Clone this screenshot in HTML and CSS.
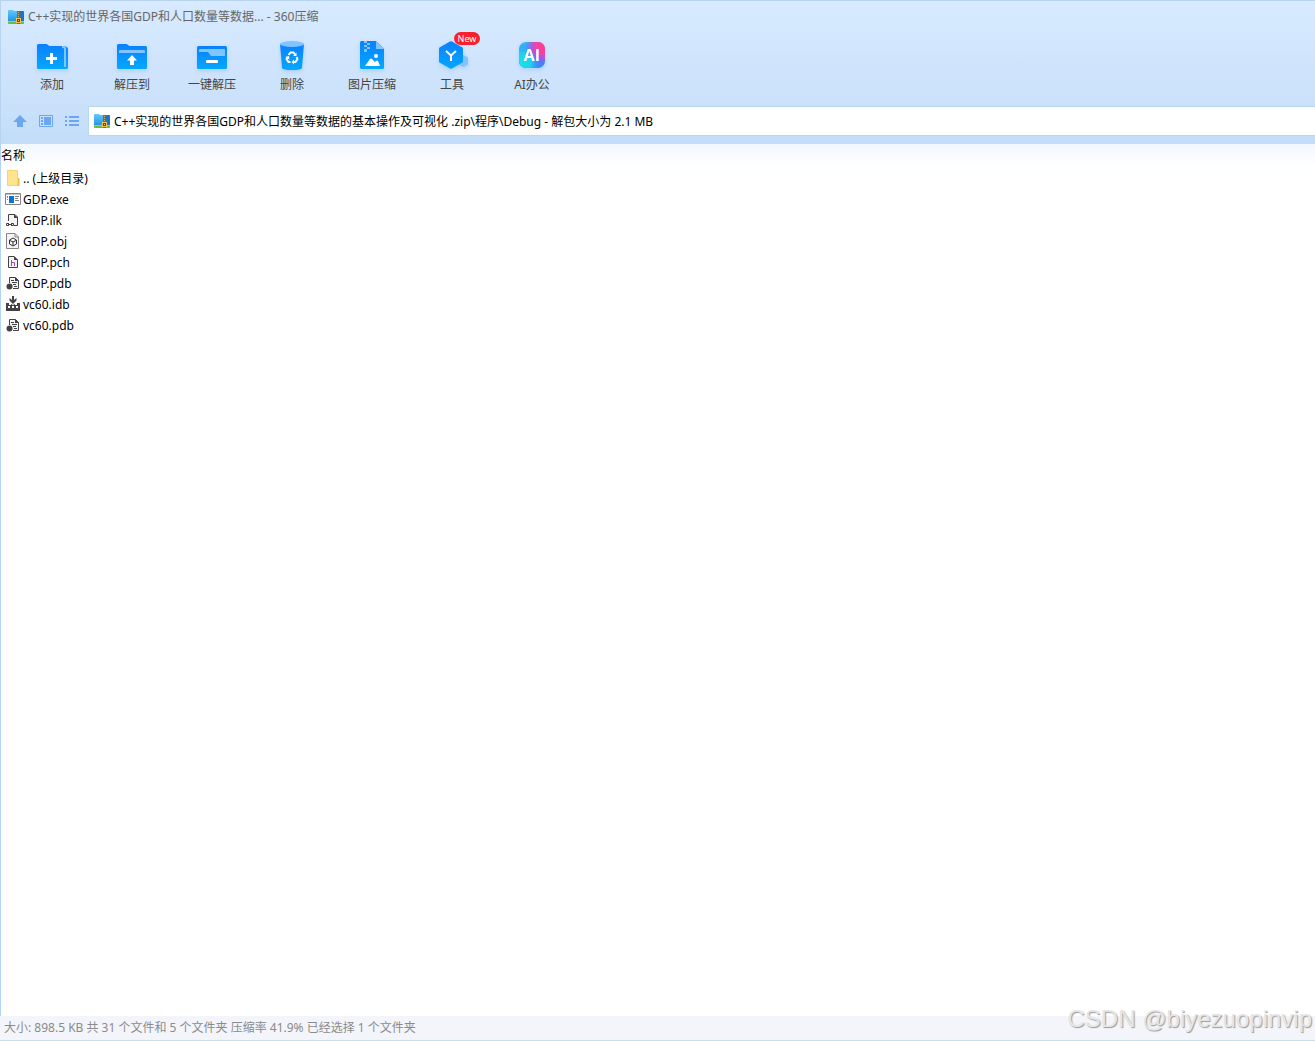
FILE: index.html
```html
<!DOCTYPE html>
<html lang="zh-CN">
<head>
  <meta charset="UTF-8" />
  <meta name="viewport" content="width=device-width, initial-scale=1" />
  <title>360压缩</title>
  <link rel="stylesheet" href="styles.css">
</head>
<body>

  <!-- Shared symbols -->
  <svg class="defs" width="0" height="0" aria-hidden="true">
    <defs>
      <linearGradient id="blue" x1="0" y1="0" x2="0" y2="1">
        <stop offset="0" stop-color="#0a80ff" />
        <stop offset="1" stop-color="#04a8fe" />
      </linearGradient>
      <linearGradient id="folderBlue" x1="0" y1="0" x2="0" y2="1">
        <stop offset="0" stop-color="#5fcbfa" />
        <stop offset="1" stop-color="#2794e4" />
      </linearGradient>
      <linearGradient id="aiBase" x1="0" y1="0" x2="1" y2="1">
        <stop offset="0" stop-color="#21cdf2" />
        <stop offset="0.3" stop-color="#4a9bf5" />
        <stop offset="0.45" stop-color="#b04af0" />
        <stop offset="0.7" stop-color="#5b73f8" />
        <stop offset="1" stop-color="#2395ff" />
      </linearGradient>
      <radialGradient id="aiPink" cx="0.95" cy="0.15" r="0.7">
        <stop offset="0" stop-color="#ff3d86" />
        <stop offset="0.45" stop-color="#ee43ae" />
        <stop offset="1" stop-color="#b04af0" stop-opacity="0" />
      </radialGradient>
      <radialGradient id="aiCyan" cx="0.1" cy="0.8" r="0.75">
        <stop offset="0" stop-color="#16e4e8" />
        <stop offset="0.5" stop-color="#1fd0ee" />
        <stop offset="1" stop-color="#2395ff" stop-opacity="0" />
      </radialGradient>
    </defs>
    <symbol id="zip" viewBox="0 0 16 14">
      <path d="M0 1q0-1 1-1h4l1 1h9q1 0 1 1v9H0z" fill="url(#folderBlue)" />
      <path d="M12 1h3q1 0 1 1v9h-4z" fill="#1877c2" />
      <path d="M0 11h16v1H0z" fill="#f5b32b" />
      <path d="M0 12h16v1q0 1-1 1H1q-1 0-1-1z" fill="#66bd3f" />
      <path d="M9 1h3v13H9z" fill="#a95b17" />
      <path d="M10 2h1v1h-1zM10 4h1v1h-1zM10 6h1v1h-1z" fill="#d9a05c" />
      <path d="M8 8h5v5H8z" fill="#f2c451" />
      <path d="M9 9h3v3H9z" fill="#7b3c0a" />
      <path d="M10 10h1v1h-1z" fill="#f2c451" />
    </symbol>
    <symbol id="pdb" viewBox="0 0 14 14">
      <path d="M3.500 7V1.500H9.500L12.500 4.500V12.500H7" fill="#f3f3f3" stroke="#424242" />
      <path d="M9 1v4h4zM5 4h3v1H5zM6 6h5v1H6zM7 8h3v1H7zM8 10h3v1H8z" fill="#424242" />
      <circle cx="3.500" cy="10.500" r="3" fill="#424242" />
    </symbol>
  </svg>

  <div class="window">
    <header class="top">
      <div class="title-bar">
        <svg class="zip-icon"><use href="#zip" /></svg>
        <span>C++实现的世界各国GDP和人口数量等数据... - 360压缩</span>
      </div>

      <nav class="toolbar">
        <button type="button" class="tool">
          <svg class="tool-icon" viewBox="0 0 32 32">
            <path d="M1 4.500q0-1.500 1.500-1.500h8l3 2H27q4.500 0 5 3v18.500q0 1.500-1.500 1.500h-28q-1.500 0-1.500-1.500z" fill="url(#blue)" />
            <path d="M26 5h2q2 0 2 2V26H28V8q0-1-1-1h-1z" fill="#80c5ff" />
            <path d="M14 12h3v4h4v3h-4v4h-3v-4h-4v-3h4z" fill="#fff" />
          </svg>
          添加
        </button>
        <button type="button" class="tool">
          <svg class="tool-icon" viewBox="0 0 32 32">
            <path d="M1 4.500q0-1.500 1.500-1.500h8l3 2H29.500q1.500 0 1.500 1.500v20q0 1.500-1.500 1.500h-27q-1.500 0-1.500-1.500z" fill="url(#blue)" />
            <path d="M3 12V10Q3 9 4 9h24q1 0 1 1v2z" fill="#80c5ff" />
            <path d="M16 14l5 5.500h-3V24h-4v-4.500h-3z" fill="#fff" />
          </svg>
          解压到
        </button>
        <button type="button" class="tool">
          <svg class="tool-icon" viewBox="0 0 32 32">
            <rect x="1" y="5" width="30" height="23" rx="1.500" fill="url(#blue)" />
            <path d="M3 9q0-1 1-1h24q1 0 1 1v6H15l-3-4H3z" fill="#80c5ff" />
            <rect x="10" y="19" width="12" height="3" rx="1" fill="#fff" />
          </svg>
          一键解压
        </button>
        <button type="button" class="tool">
          <svg class="tool-icon" viewBox="0 0 32 32">
            <path d="M4 3h24l-2 24q-1 2-10 2T6 27z" fill="url(#blue)" />
            <ellipse cx="16" cy="3" rx="12" ry="3" fill="#80c5ff" />
            <g fill="none" stroke="#fff" stroke-width="2">
              <path d="M12.500 14l2-2.500h3l1.500 2" />
              <path d="M20.500 16l1 2-2 3H17.500" />
              <path d="M14.500 21h-2l-2-3 1-2" />
            </g>
            <path d="M20.500 11.500V15H17zM18 18.500v5L15.500 21zM9.500 16l3.500-1 .5 3.500z" fill="#fff" />
          </svg>
          删除
        </button>
        <button type="button" class="tool">
          <svg class="tool-icon" viewBox="0 0 32 32">
            <path d="M4 1.500Q4 0 5.500 0H20l8 8v18.500q0 1.500-1.500 1.500h-21Q4 28 4 26.500z" fill="url(#blue)" />
            <path d="M20 0l8 8h-8z" fill="#80c5ff" />
            <path d="M8 0h3v2H8zM11 2h3v2h-3zM8 4h3v2H8zM11 6h3v2h-3zM8 8h3v3H8z" fill="#80c5ff" />
            <path d="M9 25l5-7q1-1 2 0l3 3 1-1q1-1 2 0l2 5z" fill="#fff" />
            <circle cx="20" cy="15" r="2" fill="#fff" />
          </svg>
          图片压缩
        </button>
        <button type="button" class="tool">
          <svg class="tool-icon" viewBox="0 0 32 32">
            <path d="M27.500 14l4.500 2.500v7L27.500 26 22 23.500V17z" fill="#80c5ff" />
            <path d="M14 .5q1-.5 2 0L26.500 6.500q.5.500.5 1.500v12q0 1-.5 1.500L16 27.500q-1 .5-2 0L3.500 21.500Q3 21 3 20V8q0-1 .5-1.500z" fill="url(#blue)" />
            <path d="M10 10l5 4.500 5-4.500M15 14v6" fill="none" stroke="#fff" stroke-width="2" />
          </svg>
          <span class="badge">New</span>
          工具
        </button>
        <button type="button" class="tool">
          <svg class="tool-icon" viewBox="0 0 32 32">
            <rect x="3" y="1" width="26" height="26" rx="7" fill="url(#aiBase)" />
            <rect x="3" y="1" width="26" height="26" rx="7" fill="url(#aiCyan)" />
            <rect x="3" y="1" width="26" height="26" rx="7" fill="url(#aiPink)" />
            <text x="16" y="20" class="ai-text">AI</text>
          </svg>
          AI办公
        </button>
      </nav>

      <div class="address-bar">
        <div class="nav-buttons">
          <button type="button" class="nav-btn" aria-label="向上">
            <svg width="16" height="16" viewBox="0 0 16 16"><path d="M8 2l7 7h-4v5H5V9H1z" fill="#6ba6f2" /></svg>
          </button>
          <button type="button" class="nav-btn" aria-label="预览">
            <svg width="16" height="16" viewBox="0 0 16 16">
              <path d="M1.500 2.500h13v11h-13z" fill="none" stroke="#6ba6f2" />
              <path d="M6 4h7v8H6zM3 4h2v2H3zM3 7h2v2H3zM3 10h2v2H3z" fill="#6ba6f2" />
            </svg>
          </button>
          <button type="button" class="nav-btn" aria-label="列表">
            <svg width="16" height="16" viewBox="0 0 16 16"><path d="M1 3h2v2H1zM5 3h10v2H5zM1 7h2v2H1zM5 7h10v2H5zM1 11h2v2H1zM5 11h10v2H5z" fill="#6ba6f2" /></svg>
          </button>
        </div>
        <label class="path">
          <svg class="zip-icon"><use href="#zip" /></svg>
          <input type="text" class="path-input" aria-label="路径" value="C++实现的世界各国GDP和人口数量等数据的基本操作及可视化 .zip\程序\Debug - 解包大小为 2.1 MB" />
        </label>
      </div>
    </header>

    <!-- File list -->
    <main class="files">
      <table class="file-table">
        <thead>
          <tr><th>名称</th></tr>
        </thead>
        <tbody>
          <tr><td><div class="file">
            <svg class="file-icon" viewBox="0 0 16 16"><path d="M2 0h11v8h1v8H2z" fill="#ffe490" /><path d="M13 8h1.500v8H12v-7z" fill="#e9bf4d" /><path d="M2.500.5h10v15h-10z" fill="none" stroke="#f5d46f" /></svg>
            <span>.. (上级目录)</span>
          </div></td></tr>
          <tr><td><div class="file">
            <svg class="file-icon" viewBox="0 0 16 16"><path d="M.5 2.500h15v11H.5z" fill="#fff" stroke="#858585" /><path d="M1 3h14v1H1z" fill="#c4c4c4" /><path d="M4 5h5v7H4z" fill="#0875d1" /><path d="M2 5h1v2H2zM2 8h1v1H2zM10 5h4v1h-4zM10 7h3v1h-3zM10 9h4v1h-4z" fill="#858585" /></svg>
            <span>GDP.exe</span>
          </div></td></tr>
          <tr><td><div class="file">
            <svg class="file-icon" viewBox="0 0 16 16"><path d="M3.500 9V2.500H10L12.500 5v8.500H9" fill="#f3f3f3" stroke="#424242" /><path d="M9 2v4h4z" fill="#424242" /><path d="M4 11.500H1.500v2H4M6 11.500h2.500v2H6M3 12.500h4" fill="none" stroke="#424242" /></svg>
            <span>GDP.ilk</span>
          </div></td></tr>
          <tr><td><div class="file">
            <svg class="file-icon" viewBox="0 0 16 16"><path d="M1.500.5H10L13.500 4v11.500h-12z" fill="#f5f5f5" stroke="#858585" /><path d="M10 .5V4h3.500" fill="none" stroke="#858585" /><path d="M8 5l3.500 2v4L8 13l-3.500-2V7zM5 7.500L8 9l3-1.500M8 9v4" fill="none" stroke="#333" /></svg>
            <span>GDP.obj</span>
          </div></td></tr>
          <tr><td><div class="file">
            <svg class="file-icon" viewBox="0 0 16 16"><path d="M3.500 2.500H9L12.500 6v7.500h-9z" fill="#f3f3f3" stroke="#424242" /><path d="M9 2v4h4z" fill="#424242" /><path d="M6.500 6v6M6.500 8.500h3V12" fill="none" stroke="#a04ba8" /></svg>
            <span>GDP.pch</span>
          </div></td></tr>
          <tr><td><div class="file">
            <svg class="file-icon" viewBox="-1 -1 16 16"><use href="#pdb" width="14" height="14" /></svg>
            <span>GDP.pdb</span>
          </div></td></tr>
          <tr><td><div class="file">
            <svg class="file-icon" viewBox="0 0 16 16"><path d="M7 0h2v4l2.500-2v2.500L8 8 4.500 4.500V2L7 4z" fill="#424242" /><path d="M1 7h3v2h2V8l2 1 2-1v1h2V7h3v8H1z" fill="#424242" /><path d="M3 10h2v2H3zM7 10h2v2H7zM11 10h2v2h-2z" fill="#fff" /></svg>
            <span>vc60.idb</span>
          </div></td></tr>
          <tr><td><div class="file">
            <svg class="file-icon" viewBox="-1 -1 16 16"><use href="#pdb" width="14" height="14" /></svg>
            <span>vc60.pdb</span>
          </div></td></tr>
        </tbody>
      </table>
    </main>

    <footer class="status">
      <span>大小: 898.5 KB 共 31 个文件和 5 个文件夹 压缩率 41.9% 已经选择 1 个文件夹</span>
    </footer>
    <div class="watermark">CSDN @biyezuopinvip</div>
  </div>

</body>
</html>
```
FILE: styles.css
```css
* {
  box-sizing: border-box;
}

body {
  margin: 0;
  font-family: "Noto Sans", "Noto Sans CJK SC", sans-serif;
  font-size: 12px;
  line-height: 16px;
  color: #000;
  background: #fff;
}

button, input {
  font: inherit;
  color: inherit;
  border: none;
  background: none;
  padding: 0;
}

.defs {
  position: absolute;
}

.window {
  position: relative;
  display: flex;
  flex-direction: column;
  min-height: 100vh;
}

/* Title, toolbar and address */
.top {
  height: 144px;
  border-top: 1px solid #b7d3f0;
  border-left: 1px solid #b7d3f0;
  background: linear-gradient(#d7eaff, #cce2fb 65%, #c2ddf9);
}

.title-bar {
  display: flex;
  align-items: center;
  gap: 4px;
  height: 32px;
  padding-left: 7px;
  color: #666;
}

.zip-icon {
  width: 16px;
  height: 14px;
  flex: none;
}

.toolbar {
  display: flex;
  height: 73px;
  padding-left: 11px;
}

.tool {
  position: relative;
  display: flex;
  flex-direction: column;
  align-items: center;
  gap: 4px;
  width: 80px;
  height: 66px;
  padding-top: 8px;
  color: #444;
  cursor: pointer;
}

.tool-icon {
  width: 32px;
  height: 32px;
  overflow: visible;
  filter: drop-shadow(0 2px 2px rgba(40, 130, 230, 0.2));
}

.ai-text {
  font-family: "Open Sans", sans-serif;
  font-size: 16px;
  font-weight: bold;
  text-anchor: middle;
  fill: #fff;
}

.badge {
  position: absolute;
  top: -1px;
  left: 42px;
  width: 26px;
  height: 13px;
  border-radius: 7px;
  background: #f91f2c;
  color: #fff;
  font-size: 9px;
  line-height: 13px;
  text-align: center;
}

.address-bar {
  display: flex;
  align-items: center;
  height: 30px;
}

.nav-buttons {
  display: flex;
  gap: 10px;
  width: 87px;
  padding-left: 11px;
}

.nav-btn {
  width: 16px;
  height: 16px;
  cursor: pointer;
}

.nav-btn svg {
  display: block;
}

.path {
  display: flex;
  flex: 1;
  align-items: center;
  gap: 4px;
  height: 30px;
  padding-left: 5px;
  border: 1px solid #b9d6f3;
  border-right: none;
  background: #fff;
}

.path-input {
  flex: 1;
  height: 20px;
  outline: none;
}

/* File list */
.files {
  flex: 1;
  border-left: 1px solid #b4d3f7;
  background: linear-gradient(#f2f8ff, #fff 24px);
}

.file-table {
  width: 100%;
  border-collapse: collapse;
}

.file-table th {
  height: 24px;
  padding: 0;
  font-weight: normal;
  text-align: left;
}

.file-table td {
  height: 21px;
  padding: 0 0 0 4px;
}

.file {
  display: flex;
  align-items: center;
  gap: 2px;
}

.file-icon {
  width: 16px;
  height: 16px;
  margin-bottom: 1px;
  flex: none;
}

/* Status bar */
.status {
  display: flex;
  align-items: center;
  height: 25px;
  padding-left: 4px;
  border-bottom: 1px solid #c5e0e8;
  background: #f3f5fa;
  color: #8b8b8b;
}

.watermark {
  position: absolute;
  right: 3px;
  bottom: 6px;
  font-family: "Liberation Sans", Arial, sans-serif;
  font-size: 24px;
  line-height: 32px;
  color: #e6e6e8;
  text-shadow: 1px 1px 1px #999;
}
```
